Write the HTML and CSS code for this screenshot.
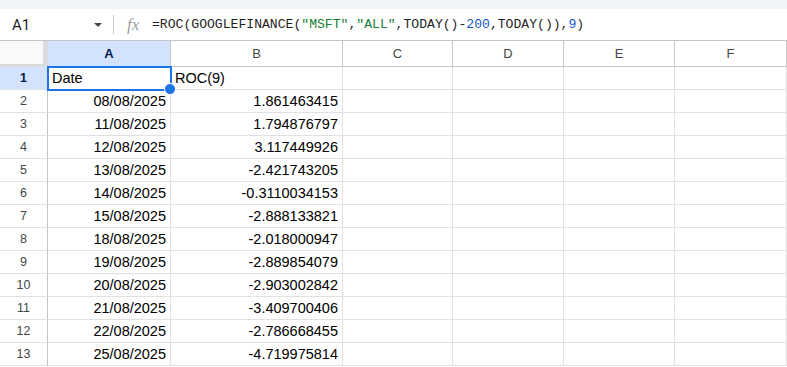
FILE: index.html
```html
<!DOCTYPE html>
<html lang="en">
<head>
    <meta charset="UTF-8">
    <title>Sheet - ROC(9)</title>
    <link rel="stylesheet" href="styles.css">
</head>
<body>
    <div class="top-band"></div>
    <div class="formula-bar">
        <div class="name-box">
            <span class="cell-ref">A1</span>
            <span class="caret"></span>
        </div>
        <span class="divider"></span>
        <span class="fx">fx</span>
        <div class="formula">=ROC(GOOGLEFINANCE(<span class="str">"MSFT"</span>,<span class="str">"ALL"</span>,TODAY()-<span class="num">200</span>,TODAY()),<span class="num">9</span>)</div>
    </div>

    <div class="sheet">
        <div class="corner"></div>
        <div class="col-head selected">A</div>
        <div class="col-head">B</div>
        <div class="col-head">C</div>
        <div class="col-head">D</div>
        <div class="col-head">E</div>
        <div class="col-head">F</div>

        <div class="row-head selected">1</div>
        <div class="cell active">Date</div>
        <div class="cell">ROC(9)</div>
        <div class="cell"></div><div class="cell"></div><div class="cell"></div><div class="cell"></div>

        <div class="row-head">2</div>
        <div class="cell right">08/08/2025</div>
        <div class="cell right">1.861463415</div>
        <div class="cell"></div><div class="cell"></div><div class="cell"></div><div class="cell"></div>

        <div class="row-head">3</div>
        <div class="cell right">11/08/2025</div>
        <div class="cell right">1.794876797</div>
        <div class="cell"></div><div class="cell"></div><div class="cell"></div><div class="cell"></div>

        <div class="row-head">4</div>
        <div class="cell right">12/08/2025</div>
        <div class="cell right">3.117449926</div>
        <div class="cell"></div><div class="cell"></div><div class="cell"></div><div class="cell"></div>

        <div class="row-head">5</div>
        <div class="cell right">13/08/2025</div>
        <div class="cell right">-2.421743205</div>
        <div class="cell"></div><div class="cell"></div><div class="cell"></div><div class="cell"></div>

        <div class="row-head">6</div>
        <div class="cell right">14/08/2025</div>
        <div class="cell right">-0.3110034153</div>
        <div class="cell"></div><div class="cell"></div><div class="cell"></div><div class="cell"></div>

        <div class="row-head">7</div>
        <div class="cell right">15/08/2025</div>
        <div class="cell right">-2.888133821</div>
        <div class="cell"></div><div class="cell"></div><div class="cell"></div><div class="cell"></div>

        <div class="row-head">8</div>
        <div class="cell right">18/08/2025</div>
        <div class="cell right">-2.018000947</div>
        <div class="cell"></div><div class="cell"></div><div class="cell"></div><div class="cell"></div>

        <div class="row-head">9</div>
        <div class="cell right">19/08/2025</div>
        <div class="cell right">-2.889854079</div>
        <div class="cell"></div><div class="cell"></div><div class="cell"></div><div class="cell"></div>

        <div class="row-head">10</div>
        <div class="cell right">20/08/2025</div>
        <div class="cell right">-2.903002842</div>
        <div class="cell"></div><div class="cell"></div><div class="cell"></div><div class="cell"></div>

        <div class="row-head">11</div>
        <div class="cell right">21/08/2025</div>
        <div class="cell right">-3.409700406</div>
        <div class="cell"></div><div class="cell"></div><div class="cell"></div><div class="cell"></div>

        <div class="row-head">12</div>
        <div class="cell right">22/08/2025</div>
        <div class="cell right">-2.786668455</div>
        <div class="cell"></div><div class="cell"></div><div class="cell"></div><div class="cell"></div>

        <div class="row-head">13</div>
        <div class="cell right">25/08/2025</div>
        <div class="cell right">-4.719975814</div>
        <div class="cell"></div><div class="cell"></div><div class="cell"></div><div class="cell"></div>
    </div>
</body>
</html>
```

FILE: styles.css
```css
* {
    box-sizing: border-box;
}
body {
    margin: 0;
    width: 787px;
    height: 367px;
    overflow: hidden;
    background-color: #ffffff;
    font-family: 'Liberation Sans', Arial, sans-serif;
    color: #000;
}
.top-band {
    height: 9px;
    background-color: #f0f3f7;
}
.formula-bar {
    display: flex;
    align-items: center;
    height: 32px;
    border-bottom: 1px solid #c4c7c5;
    background-color: #fff;
}
.name-box {
    display: flex;
    align-items: center;
    justify-content: space-between;
    width: 102px;
    padding-left: 12px;
}
.cell-ref {
    font-family: Roboto, 'Liberation Sans', sans-serif;
    font-size: 15px;
    color: #1f1f1f;
}
.caret {
    width: 0;
    height: 0;
    border-left: 4.5px solid transparent;
    border-right: 4.5px solid transparent;
    border-top: 4.5px solid #444746;
}
.divider {
    width: 1px;
    height: 19px;
    margin-left: 11px;
    background-color: #c4c7c5;
}
.fx {
    margin-left: 13px;
    width: 25px;
    font-family: 'Liberation Serif', serif;
    font-style: italic;
    font-size: 17px;
    color: #a0a0a0;
}
.formula {
    font-family: 'Liberation Mono', monospace;
    font-size: 13.1px;
    color: #1f1f1f;
    white-space: nowrap;
}
.formula .str {
    color: #188038;
}
.formula .num {
    color: #1155cc;
}
.sheet {
    display: grid;
    grid-template-columns: 48px 123px 172px 110px 111px 111px 112px;
    grid-template-rows: 26px repeat(13, 23px);
}
.corner {
    background-color: #f8f9fa;
    border-right: 5px solid #d9dbde;
    border-bottom: 3px solid #d9dbde;
}
.col-head {
    display: flex;
    align-items: center;
    justify-content: center;
    font-family: 'Liberation Sans', Arial, sans-serif;
    font-size: 13px;
    color: #444746;
    background-color: #fff;
    border-right: 1px solid #c4c7c5;
    border-bottom: 1px solid #c4c7c5;
}
.col-head.selected {
    background-color: #d3e3fd;
    color: #041e49;
    font-weight: bold;
}
.row-head {
    display: flex;
    align-items: center;
    justify-content: center;
    font-size: 12.5px;
    color: #444746;
    background-color: #fff;
    border-right: 1px solid #c4c7c5;
    border-bottom: 1px solid #e1e1e1;
}
.row-head.selected {
    background-color: #d3e3fd;
    color: #041e49;
    font-weight: bold;
}
.cell {
    font-size: 14.5px;
    line-height: 22px;
    padding: 0 4px;
    white-space: nowrap;
    border-right: 1px solid #e1e1e1;
    border-bottom: 1px solid #e1e1e1;
}
.cell.right {
    text-align: right;
}
.cell.active {
    position: relative;
    z-index: 2;
    outline: 2px solid #1a73e8;
    outline-offset: -1px;
}
.cell.active::after {
    content: "";
    position: absolute;
    right: -6px;
    bottom: -6px;
    width: 10px;
    height: 10px;
    border-radius: 50%;
    background-color: #1a73e8;
    border: 1px solid #fff;
}
```
